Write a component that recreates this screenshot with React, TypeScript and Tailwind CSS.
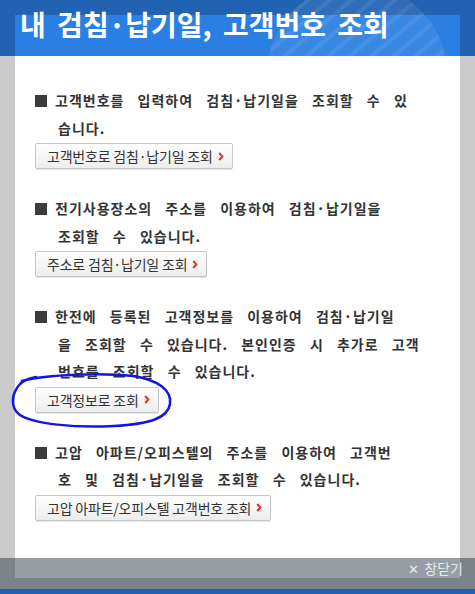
import React from 'react';

const sections = [
  {
    lines: ['고객번호를 입력하여 검침·납기일을 조회할 수 있', '습니다.'],
    button: '고객번호로 검침·납기일 조회',
  },
  {
    lines: ['전기사용장소의 주소를 이용하여 검침·납기일을', '조회할 수 있습니다.'],
    button: '주소로 검침·납기일 조회',
  },
  {
    lines: [
      '한전에 등록된 고객정보를 이용하여 검침·납기일',
      '을 조회할 수 있습니다. 본인인증 시 추가로 고객',
      '번호를 조회할 수 있습니다.',
    ],
    button: '고객정보로 조회',
    circled: true,
  },
  {
    lines: ['고압 아파트/오피스텔의 주소를 이용하여 고객번', '호 및 검침·납기일을 조회할 수 있습니다.'],
    button: '고압 아파트/오피스텔 고객번호 조회',
  },
];

function Chevron() {
  return (
    <svg width="6" height="9" viewBox="0 0 6 9" className="shrink-0">
      <polyline points="1.2,1 4.4,4.5 1.2,8" fill="none" stroke="#e5332f" strokeWidth="2" />
    </svg>
  );
}

function HeaderDeco() {
  return (
    <svg className="pointer-events-none absolute inset-0" width="475" height="56" viewBox="0 0 475 56">
      <defs>
        <clipPath id="deco-circle">
          <circle cx="357" cy="74" r="90" />
        </clipPath>
        <pattern id="deco-stripes" width="14" height="14" patternUnits="userSpaceOnUse" patternTransform="rotate(-40)">
          <rect width="14" height="4" fill="#ffffff" fillOpacity="0.07" />
        </pattern>
      </defs>
      <circle cx="357" cy="74" r="90" fill="#ffffff" fillOpacity="0.07" />
      <rect x="250" y="0" width="225" height="56" fill="url(#deco-stripes)" clipPath="url(#deco-circle)" />
    </svg>
  );
}

export default function App() {
  return (
    <div
      className="relative flex h-[594px] w-[475px] flex-col overflow-hidden bg-[#cbcbcb]"
      style={{ fontFamily: '"Noto Sans CJK KR", "Noto Sans", sans-serif' }}
    >
      {/* 헤더 */}
      <div className="relative h-[56px] shrink-0 bg-[#2262b3]">
        <div className="absolute bottom-0 left-[15px] right-[15px] top-[15px] bg-[#2b7fe2]" />
        <HeaderDeco />
        <h1 className="relative pl-[20px] pt-[4px] text-[28px] font-bold leading-[40px] tracking-[0px] text-white [word-spacing:5px]">
          내 검침·납기일, 고객번호 조회
        </h1>
      </div>

      {/* 본문 */}
      <div className="mx-[15px] h-[522px] shrink-0 bg-white pl-[20px] pt-[31px]">
        <div className="space-y-[26px]">
          {sections.map((s) => (
            <div key={s.button}>
              <p className="pl-[23px] -indent-[23px] text-[14px] font-bold leading-[27.5px] tracking-[1px] whitespace-nowrap text-[#333] [word-spacing:9px]">
                <span className="mr-[8px] inline-block h-[12px] w-[12px] bg-[#3c3c3c] align-[-1px] indent-0" />
                {s.lines.map((line, i) => (
                  <React.Fragment key={i}>
                    {i > 0 && <br />}
                    {line}
                  </React.Fragment>
                ))}
              </p>
              <div className="relative mt-[1px]">
                <button
                  type="button"
                  className="flex h-[26px] items-center gap-[5px] rounded-[2px] border border-[#c6c6c6] bg-gradient-to-b from-white to-[#ededed] pl-[11px] pr-[8px] text-[14px] leading-none tracking-[-0.2px] text-[#333] shadow-[0_1px_0_#e6e6e6]"
                >
                  <span className="whitespace-nowrap">{s.button}</span>
                  <Chevron />
                </button>
                {s.circled && (
                  <svg
                    className="pointer-events-none absolute left-[-27px] top-[-15px]"
                    width="175"
                    height="62"
                    viewBox="0 0 175 62"
                  >
                    <path
                      d="M14 9 C 40 2, 95 1, 125 4 C 150 8, 164 18, 162 32 C 160 46, 142 52, 106 54 C 66 56, 26 52, 12 43 C 2 36, 3 22, 12 12 C 16 8, 22 6, 28 5"
                      fill="none"
                      stroke="#1414e6"
                      strokeWidth="2.5"
                      strokeLinecap="round"
                    />
                  </svg>
                )}
              </div>
            </div>
          ))}
        </div>
      </div>
      <div className="h-[11px] shrink-0" />
      <div className="h-[5px] shrink-0 bg-[#2262b3]" />

      {/* 창닫기 바 */}
      <div className="absolute left-0 right-0 top-[558px] h-[31px] bg-[rgba(29,46,62,0.46)]">
        <div className="flex h-[20px] items-center justify-end pr-[12px] text-[14px] leading-none text-[#e8eaec]">
          <span className="mr-[5px] text-[13px]">✕</span>
          창닫기
        </div>
      </div>
    </div>
  );
}
